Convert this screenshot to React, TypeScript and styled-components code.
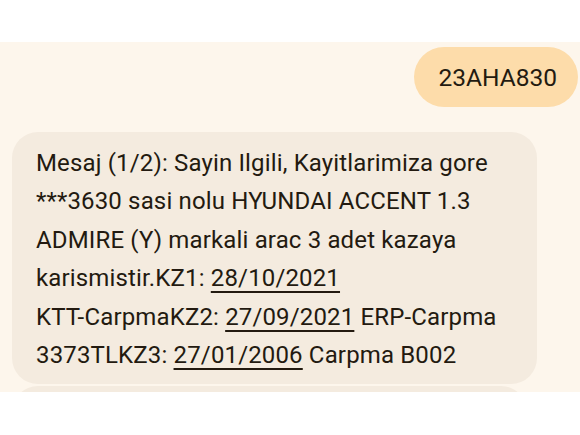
import React from 'react'
import { styled, createGlobalStyle } from 'styled-components'

const GlobalStyle = createGlobalStyle`
  html, body {
    margin: 0;
    padding: 0;
    background: #ffffff;
  }
  body {
    font-family: Roboto, 'Noto Sans', sans-serif;
    -webkit-font-smoothing: antialiased;
  }
`

type Part = { text: string; date?: boolean }

const incoming: Part[][] = [
  [{ text: 'Mesaj (1/2): Sayin Ilgili, Kayitlarimiza gore' }],
  [{ text: '***3630 sasi nolu HYUNDAI ACCENT 1.3' }],
  [{ text: 'ADMIRE (Y) markali arac 3 adet kazaya' }],
  [{ text: 'karismistir.KZ1: ' }, { text: '28/10/2021', date: true }],
  [{ text: 'KTT-CarpmaKZ2: ' }, { text: '27/09/2021', date: true }, { text: ' ERP-Carpma' }],
  [{ text: '3373TLKZ3: ' }, { text: '27/01/2006', date: true }, { text: ' Carpma B002' }],
]

const App: React.FC = () => {
  return (
    <>
      <GlobalStyle />
      <Screen>
        <TopBar />
        <Thread>
          <SentRow>
            <SentBubble>23AHA830</SentBubble>
          </SentRow>
          <ReceivedBubble>
            {incoming.map((line, i) => (
              <Line key={i}>
                {line.map((p, j) =>
                  p.date ? <DateLink key={j}>{p.text}</DateLink> : <span key={j}>{p.text}</span>
                )}
              </Line>
            ))}
          </ReceivedBubble>
          <NextBubble />
        </Thread>
      </Screen>
    </>
  )
}

const Screen = styled.div`
  width: 580px;
  height: 435px;
  display: flex;
  flex-direction: column;
  background: #ffffff;
  overflow: hidden;
`

const TopBar = styled.div`
  height: 42px;
  flex-shrink: 0;
  background: #ffffff;
`

const Thread = styled.div`
  height: 350px;
  flex-shrink: 0;
  background: #fdf6ec;
  display: flex;
  flex-direction: column;
  padding: 5px 2px 0 12px;
  box-sizing: border-box;
  overflow: hidden;
`

const SentRow = styled.div`
  display: flex;
  justify-content: flex-end;
`

const SentBubble = styled.div`
  height: 60px;
  padding: 0 21px 0 24px;
  border-radius: 30px;
  background: #fddcaa;
  color: #231a10;
  font-size: 24.5px;
  display: flex;
  align-items: center;
`

const ReceivedBubble = styled.div`
  margin-top: 25px;
  width: 525px;
  box-sizing: border-box;
  padding: 12px 16px 10px 24px;
  border-radius: 26px;
  background: #f4ebdf;
  color: #231a10;
  font-size: 24px;
  letter-spacing: 0.15px;
`

const Line = styled.div`
  line-height: 38.4px;
  white-space: nowrap;
`

const DateLink = styled.span`
  text-decoration: underline;
  text-decoration-thickness: 2px;
  text-underline-offset: 5px;
`

const NextBubble = styled.div`
  margin-top: 2px;
  width: 515px;
  height: 60px;
  flex-shrink: 0;
  border-radius: 26px;
  background: #f4ebdf;
`

export default App
